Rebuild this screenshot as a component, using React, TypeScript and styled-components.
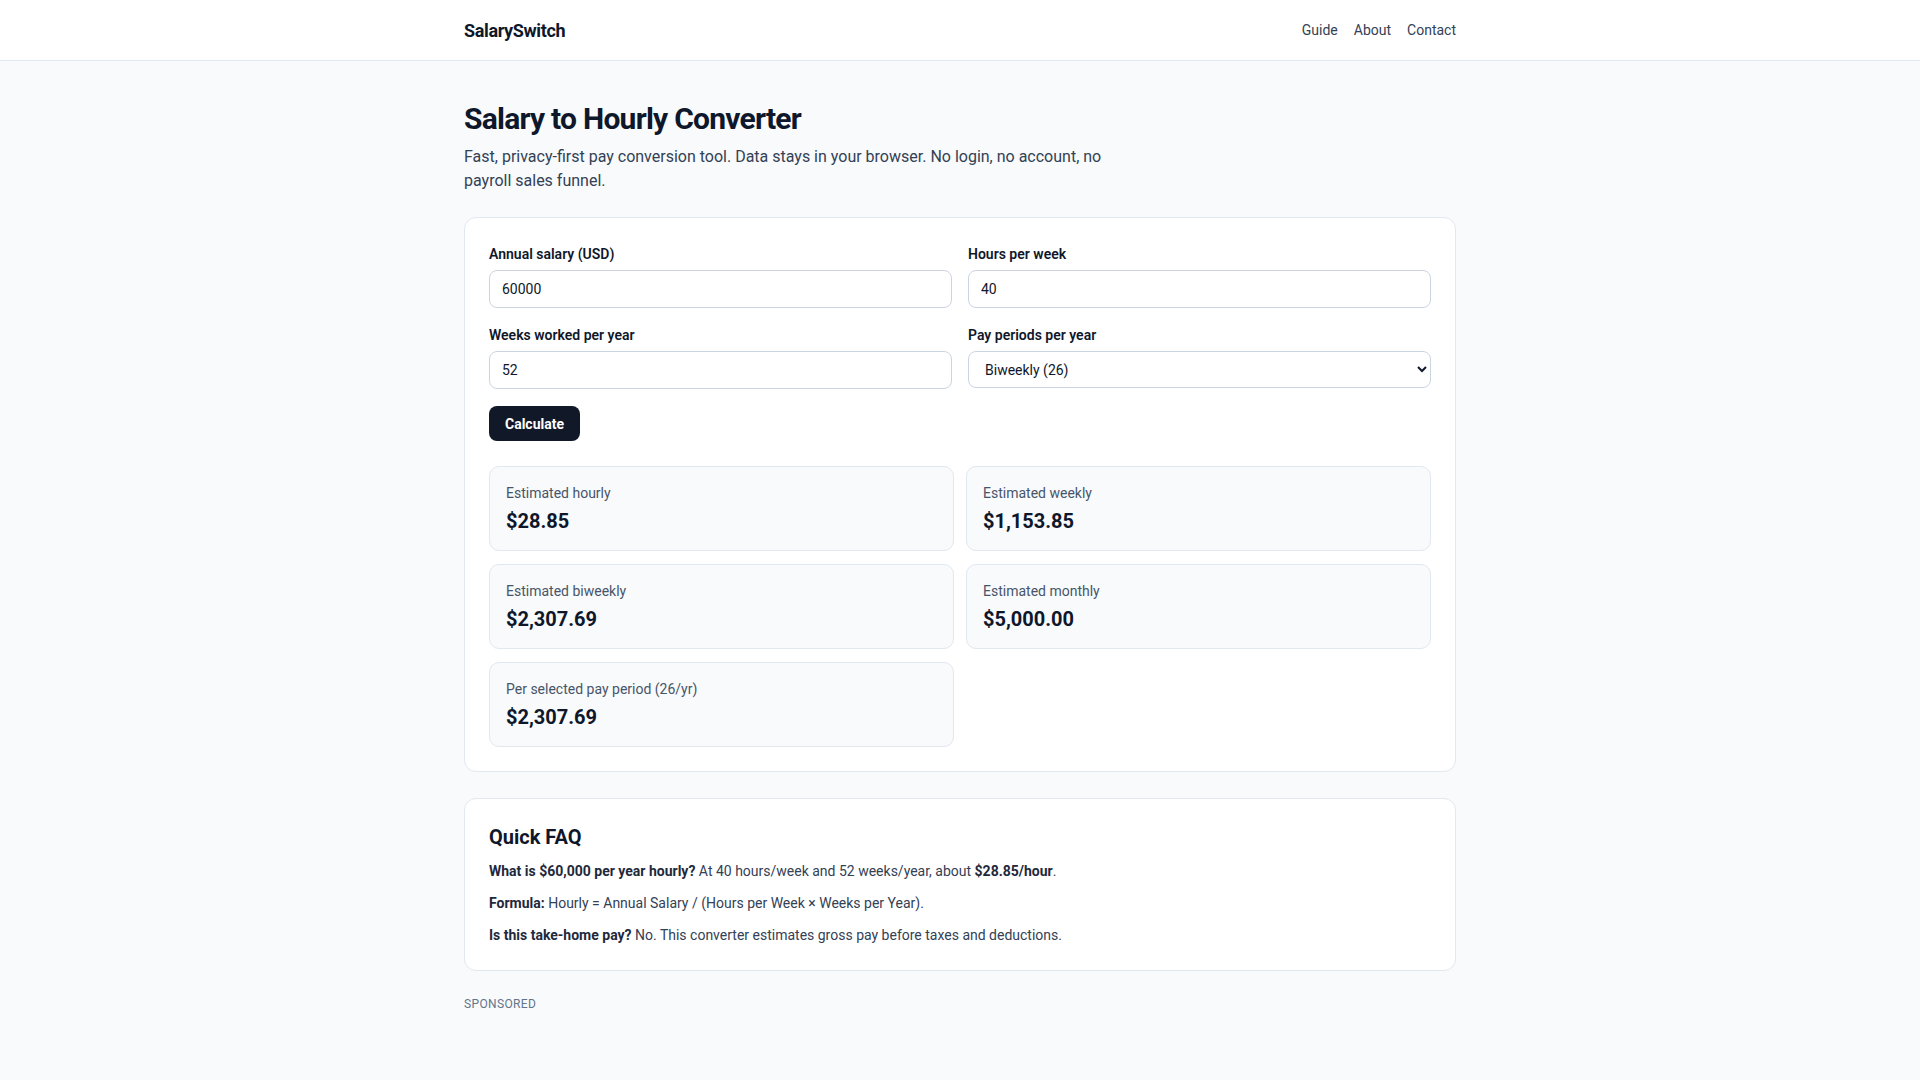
import React, { useState } from "react";
import styled, { createGlobalStyle } from "styled-components";

const GlobalStyle = createGlobalStyle`
	* { box-sizing: border-box; }
	html, body {
		margin: 0;
		padding: 0;
		background: #f8fafc;
		color: #0f172a;
		font-family: Roboto, "Liberation Sans", Arial, sans-serif;
	}
`;

const Header = styled.header`
	height: 61px;
	background: #ffffff;
	border-bottom: 1px solid #e2e8f0;
`;

const Container = styled.div`
	max-width: 1040px;
	margin: 0 auto;
	padding: 0 24px;
`;

const HeaderInner = styled(Container)`
	display: flex;
	align-items: center;
	justify-content: space-between;
	height: 100%;
`;

const Logo = styled.a`
	font-size: 18px;
	font-weight: 700;
	color: #0f172a;
	text-decoration: none;
	letter-spacing: -0.02em;
`;

const NavList = styled.nav`
	display: flex;
	gap: 16px;
`;

const NavLink = styled.a`
	font-size: 14px;
	color: #334155;
	text-decoration: none;
`;

const Main = styled(Container)`
	padding-top: 40px;
	padding-bottom: 60px;
`;

const Title = styled.h1`
	margin: 0 0 8px;
	font-size: 30px;
	line-height: 36px;
	font-weight: 700;
	letter-spacing: -0.025em;
	color: #0f172a;
`;

const Lead = styled.p`
	margin: 0 0 24px;
	max-width: 660px;
	font-size: 16px;
	line-height: 24px;
	color: #334155;
`;

const Card = styled.section<{ $top?: number }>`
	background: #ffffff;
	border: 1px solid #e2e8f0;
	border-radius: 12px;
	padding: ${(p) => p.$top ?? 24}px 24px 24px;
	margin-bottom: 26px;
`;

const FormGrid = styled.div`
	display: grid;
	grid-template-columns: 1fr 1fr;
	column-gap: 16px;
	row-gap: 17px;
`;

const Field = styled.label`
	display: flex;
	flex-direction: column;
	gap: 5px;
`;

const FieldLabel = styled.span`
	font-size: 14px;
	line-height: 21px;
	font-weight: 600;
	color: #0f172a;
`;

const Input = styled.input`
	height: 38px;
	padding: 0 12px;
	border: 1px solid #cbd5e1;
	border-radius: 8px;
	background: #ffffff;
	font: inherit;
	font-size: 14px;
	color: #0f172a;
	outline: none;
`;

const Select = styled.select`
	height: 37px;
	padding: 0 8px 0 12px;
	border: 1px solid #cbd5e1;
	border-radius: 8px;
	background: #ffffff;
	font: inherit;
	font-size: 14px;
	color: #0f172a;
	outline: none;
`;

const Button = styled.button`
	margin-top: 17px;
	height: 35px;
	padding: 0 16px;
	border: none;
	border-radius: 8px;
	background: #111827;
	color: #ffffff;
	font: inherit;
	font-size: 14px;
	font-weight: 700;
	cursor: pointer;
`;

const Results = styled.div`
	display: grid;
	grid-template-columns: 1fr 1fr;
	column-gap: 12px;
	row-gap: 13px;
	margin-top: 25px;
`;

const ResultBox = styled.div`
	background: #f8fafc;
	border: 1px solid #e2e8f0;
	border-radius: 10px;
	padding: 16px;
`;

const ResultLabel = styled.div`
	font-size: 14px;
	line-height: 20px;
	color: #475569;
`;

const ResultValue = styled.div`
	margin-top: 5px;
	font-size: 20px;
	line-height: 26px;
	font-weight: 700;
	color: #0f172a;
`;

const FaqTitle = styled.h2`
	margin: 0 0 9px;
	font-size: 20px;
	line-height: 28px;
	font-weight: 700;
	color: #0f172a;
`;

const FaqItem = styled.p`
	margin: 0 0 10px;
	font-size: 14px;
	line-height: 22px;
	color: #334155;

	&:last-child {
		margin-bottom: 0;
	}

	strong {
		color: #1e293b;
		font-weight: 700;
	}
`;

const Sponsored = styled.div`
	font-size: 12px;
	letter-spacing: 0.03em;
	text-transform: uppercase;
	color: #64748b;
`;

const money = (n: number) =>
	"$" +
	n.toLocaleString("en-US", {
		minimumFractionDigits: 2,
		maximumFractionDigits: 2,
	});

export default function App() {
	const [salary, setSalary] = useState("60000");
	const [hours, setHours] = useState("40");
	const [weeks, setWeeks] = useState("52");
	const [periods, setPeriods] = useState("26");

	const s = Number(salary) || 0;
	const h = Number(hours) || 0;
	const w = Number(weeks) || 0;
	const p = Number(periods) || 1;

	const hourly = h && w ? s / (h * w) : 0;
	const weekly = w ? s / w : 0;

	const results = [
		{ label: "Estimated hourly", value: money(hourly) },
		{ label: "Estimated weekly", value: money(weekly) },
		{ label: "Estimated biweekly", value: money(s / 26) },
		{ label: "Estimated monthly", value: money(s / 12) },
		{ label: `Per selected pay period (${p}/yr)`, value: money(s / p) },
	];

	return (
		<>
			<GlobalStyle />
			<Header>
				<HeaderInner>
					<Logo href="#">SalarySwitch</Logo>
					<NavList>
						<NavLink href="#">Guide</NavLink>
						<NavLink href="#">About</NavLink>
						<NavLink href="#">Contact</NavLink>
					</NavList>
				</HeaderInner>
			</Header>
			<Main>
				<Title>Salary to Hourly Converter</Title>
				<Lead>
					Fast, privacy-first pay conversion tool. Data stays in your browser. No login,
					no account, no payroll sales funnel.
				</Lead>

				<Card $top={26}>
					<FormGrid>
						<Field>
							<FieldLabel>Annual salary (USD)</FieldLabel>
							<Input value={salary} onChange={(e) => setSalary(e.target.value)} />
						</Field>
						<Field>
							<FieldLabel>Hours per week</FieldLabel>
							<Input value={hours} onChange={(e) => setHours(e.target.value)} />
						</Field>
						<Field>
							<FieldLabel>Weeks worked per year</FieldLabel>
							<Input value={weeks} onChange={(e) => setWeeks(e.target.value)} />
						</Field>
						<Field>
							<FieldLabel>Pay periods per year</FieldLabel>
							<Select value={periods} onChange={(e) => setPeriods(e.target.value)}>
								<option value="52">Weekly (52)</option>
								<option value="26">Biweekly (26)</option>
								<option value="24">Semi-monthly (24)</option>
								<option value="12">Monthly (12)</option>
							</Select>
						</Field>
					</FormGrid>
					<Button type="button">Calculate</Button>
					<Results>
						{results.map((r) => (
							<ResultBox key={r.label}>
								<ResultLabel>{r.label}</ResultLabel>
								<ResultValue>{r.value}</ResultValue>
							</ResultBox>
						))}
					</Results>
				</Card>

				<Card>
					<FaqTitle>Quick FAQ</FaqTitle>
					<FaqItem>
						<strong>What is $60,000 per year hourly?</strong> At 40 hours/week and 52
						weeks/year, about <strong>$28.85/hour</strong>.
					</FaqItem>
					<FaqItem>
						<strong>Formula:</strong> Hourly = Annual Salary / (Hours per Week × Weeks per
						Year).
					</FaqItem>
					<FaqItem>
						<strong>Is this take-home pay?</strong> No. This converter estimates gross pay
						before taxes and deductions.
					</FaqItem>
				</Card>

				<Sponsored>Sponsored</Sponsored>
			</Main>
		</>
	);
}
